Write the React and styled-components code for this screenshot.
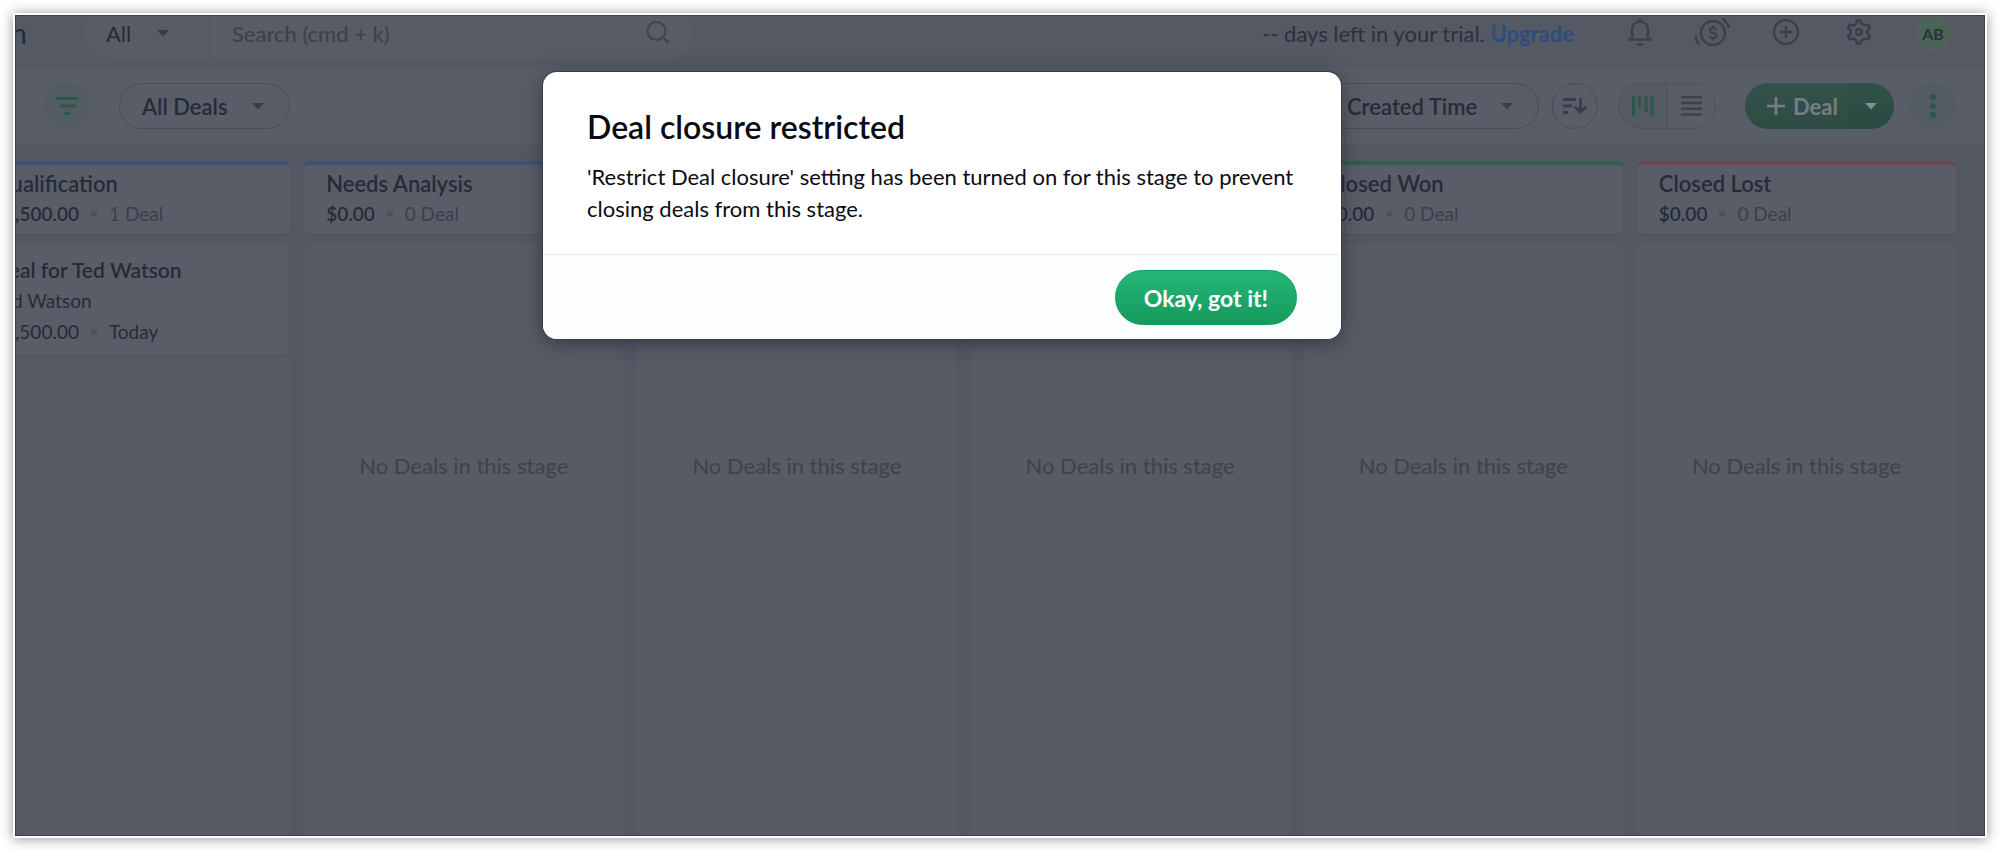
import React, { useState } from "react";
import styled, { createGlobalStyle } from "styled-components";

const GlobalStyle = createGlobalStyle`
  * {
    box-sizing: border-box;
  }

  body {
    margin: 0;
    background: #fff;
    color: #262b38;
    font-family: Lato, "Open Sans", sans-serif;
    font-size: 22px;
  }

  button,
  input,
  select {
    font: inherit;
    color: inherit;
    margin: 0;
  }

  p,
  h1,
  h2,
  h3 {
    margin: 0;
  }
`;

const Page = styled.div`
  height: 100vh;
  padding: 13px;
`;

const Frame = styled.div`
  position: relative;
  height: 100%;
  overflow: hidden;
  border: 2px solid #fff;
  background: #535863;
  box-shadow: 0 1px 12px rgba(0, 0, 0, 0.42);
`;

/* the board is scrolled a little to the right and down */
const Workspace = styled.div`
  display: flex;
  flex-direction: column;
  height: 100%;
  margin-left: -44px;
`;

const Header = styled.header`
  display: flex;
  flex: none;
  align-items: center;
  height: 68px;
  margin-top: -16px;
  padding-right: 36px;
  background: #545963;
`;

const Brand = styled.h1`
  flex: none;
  width: 56px;
  display: flex;
  justify-content: flex-end;
  font-size: 28px;
  font-weight: 400;
`;

const SearchBar = styled.div`
  display: flex;
  align-items: center;
  width: 609px;
  height: 50px;
  margin-left: 57px;
  padding-right: 23px;
  border-radius: 25px;
  background: #575c65;
  color: #3f444f;
`;

const SearchInput = styled.input`
  flex: 1;
  min-width: 0;
  height: 50px;
  padding: 0 22px;
  border: none;
  border-left: 1px solid #50545f;
  background: none;
  outline: none;

  &::placeholder {
    color: #3b404c;
    opacity: 1;
  }
`;

const SelectBox = styled.div`
  display: grid;
  align-items: center;

  > * {
    grid-area: 1 / 1;
  }

  svg {
    justify-self: end;
    margin-right: ${(props) => (props.$plain ? "40px" : "26px")};
    color: #383d48;
    pointer-events: none;
  }
`;

const Select = styled.select`
  appearance: none;
  width: ${(props) => props.$width};
  height: 46px;
  padding: 0 22px;
  border: ${(props) => (props.$plain ? "none" : "1px solid #484d5b")};
  border-radius: 23px;
  background: none;
  color: #262b38;
  font-weight: ${(props) => (props.$plain ? 400 : 600)};
  outline: none;
`;

const Trial = styled.p`
  margin-left: auto;
  color: #2b303d;
`;

const Upgrade = styled.a`
  color: #2d4d7e;
  font-weight: 700;
  text-decoration: none;
`;

const HeaderIcons = styled.nav`
  display: flex;
  align-items: center;
  gap: 33px;
  margin-left: 46px;
`;

const IconButton = styled.button`
  display: grid;
  place-items: center;
  width: 40px;
  height: 40px;
  padding: 0;
  border: none;
  background: none;
  color: #3a3f4b;
`;

const Avatar = styled.button`
  width: 32px;
  height: 32px;
  margin-left: 5px;
  padding: 0;
  border: none;
  border-radius: 50%;
  background: #4a6455;
  box-shadow: 0 0 0 2px #5a5f66;
  color: #2b323b;
  font-size: 16px;
  font-weight: 700;
`;

const Toolbar = styled.div`
  display: flex;
  flex: none;
  align-items: center;
  height: 79px;
  padding: 0 29px 0 73px;
  border-bottom: 1px solid #505560;
  background: #595d67;
`;

const RoundButton = styled.button`
  display: grid;
  place-items: center;
  flex: none;
  width: 46px;
  height: 46px;
  padding: 0;
  border: 1px solid ${(props) => (props.$outlined ? "#484d5b" : "#535b63")};
  border-radius: 50%;
  background: ${(props) => (props.$outlined ? "none" : "#535b63")};
  color: ${(props) => (props.$outlined ? "#383d4b" : "#2a584a")};
`;

const ToolGroup = styled.div`
  display: flex;
  align-items: center;
  margin-left: ${(props) => props.$gap};
`;

const ViewToggle = styled.div`
  display: flex;
  overflow: hidden;
  height: 46px;
  border: 1px solid #4d525f;
  border-radius: 23px;
`;

const ViewButton = styled.button`
  display: grid;
  place-items: center;
  width: 48px;
  padding: 0;
  border: none;
  background: ${(props) => (props.$active ? "#545964" : "none")};
  color: ${(props) => (props.$active ? "#2a584a" : "#3d424d")};

  & + & {
    border-left: 1px solid #4d525f;
  }
`;

const DealButtons = styled.div`
  display: flex;
  overflow: hidden;
  height: 46px;
  border-radius: 23px;
  background: linear-gradient(#32534a, #2d4b43);
  color: #777d84;
`;

const DealButton = styled.button`
  display: flex;
  align-items: center;
  gap: 8px;
  width: 103px;
  padding: 0 0 0 22px;
  border: none;
  background: none;
  font-weight: 700;
`;

const DealMenuButton = styled.button`
  display: grid;
  place-items: center;
  width: 46px;
  padding: 0;
  border: none;
  background: rgba(20, 60, 50, 0.06);
  color: #858b91;
`;

const Board = styled.main`
  display: grid;
  flex: 1;
  grid-template-columns: repeat(6, minmax(0, 1fr));
  gap: 14px;
  min-height: 0;
  padding: 15px 29px 0 0;
`;

const Column = styled.section`
  display: flex;
  flex-direction: column;
  gap: 10px;
  min-width: 0;
`;

const ColumnHead = styled.header`
  height: 73px;
  padding: 4px 22px;
  border-top: 4px solid ${(props) => props.$color};
  border-radius: 6px;
  background: #595d67;
  box-shadow: 0 1px 1px #505560;
  white-space: nowrap;
`;

const ColumnTitle = styled.h2`
  font-size: 22px;
  font-weight: 600;
  line-height: 30px;
`;

const Facts = styled.p`
  display: flex;
  align-items: center;
  gap: 12px;
`;

const Dot = styled.span`
  width: 6px;
  height: 6px;
  border-radius: 50%;
  background: #4b505c;
`;

const Amount = styled.span`
  font-weight: ${(props) => (props.$bold ? 600 : 400)};
`;

const Count = styled.span`
  color: #3b404c;
`;

const ColumnBody = styled.div`
  flex: 1;
  padding: 2px;
  border-radius: 6px 6px 0 0;
  background: #575b64;
`;

const Empty = styled.p`
  padding-top: 204px;
  color: #3d424e;
  line-height: 32px;
  text-align: center;
`;

const StageTotals = styled.div`
  font-size: 19px;
  line-height: 30px;
`;

const DealCard = styled.article`
  padding: 8px 20px;
  border-radius: 4px;
  background: #595d67;
  box-shadow: 0 1px 1px #505560;
  font-size: 19px;
  line-height: 31px;
  white-space: nowrap;
`;

const DealName = styled.h3`
  font-size: 21px;
  font-weight: 600;
`;

const Overlay = styled.div`
  position: absolute;
  inset: 0;
  display: flex;
  align-items: flex-start;
  justify-content: center;
  padding: 57px 116px 0 0;
  box-shadow: inset 0 0 0 1px #3a3f4b;
`;

const Dialog = styled.section`
  width: 798px;
  overflow: hidden;
  border-radius: 14px;
  background: #fff;
  box-shadow: 0 0 0 1px #3a3e49, 0 4px 20px rgba(20, 24, 36, 0.5);
  color: #0b0b14;
`;

const DialogBody = styled.div`
  padding: 35px 44px 29px;
`;

const DialogTitle = styled.h2`
  margin-bottom: 14px;
  font-size: 32px;
  font-weight: 600;
  line-height: 40px;
`;

const DialogText = styled.p`
  line-height: 32px;
`;

const DialogFooter = styled.footer`
  display: flex;
  justify-content: flex-end;
  padding: 15px 44px 14px;
  border-top: 1px solid #e6eef6;
  background: #fcfdfd;
`;

const OkButton = styled.button`
  height: 55px;
  padding: 0 28px;
  border: 1px solid #0c9f5c;
  border-radius: 28px;
  background: linear-gradient(#26b67a, #159a5b);
  color: #fff;
  font-size: 23px;
  font-weight: 700;
`;

const columns = [
  {
    name: "Qualification",
    color: "#3d5275",
    amount: "$1,500.00",
    count: "1 Deal",
    deals: [
      {
        name: "Deal for Ted Watson",
        contact: "Ted Watson",
        amount: "$1,500.00",
        date: "Today",
      },
    ],
  },
  { name: "Needs Analysis", color: "#3d5275" },
  { name: "Proposal/Price Quote", color: "#3d5275" },
  { name: "Negotiation/Review", color: "#3d5275" },
  { name: "Closed Won", color: "#345b51" },
  { name: "Closed Lost", color: "#6b4550" },
];

function Caret() {
  return (
    <svg width="12" height="7" viewBox="0 0 12 7" fill="currentColor">
      <path d="M0 0h12L6 6.5z" />
    </svg>
  );
}

function SearchIcon() {
  return (
    <svg width="24" height="24" viewBox="0 0 24 24" fill="none" stroke="currentColor" strokeWidth="2.2">
      <circle cx="10.5" cy="10" r="9" />
      <path d="M18 17.5l4.500 4" strokeWidth="3" />
    </svg>
  );
}

function BellIcon() {
  return (
    <svg width="26" height="30" viewBox="0 0 26 30" fill="none" stroke="currentColor" strokeWidth="2.4">
      <path d="M1 21.500h24M5 21.500V11.500a8 8 0 0 1 16 0v10M13 4V.5" />
      <path d="M9.500 25.500h7a3.500 2.500 0 0 1-7 0z" fill="currentColor" stroke="none" />
    </svg>
  );
}

function CoinIcon() {
  return (
    <svg width="38" height="32" viewBox="0 0 38 32" fill="none" stroke="currentColor" strokeWidth="2.4">
      <circle cx="19" cy="16" r="12" />
      <path d="M22.300 13c-.4-1.300-1.600-2-3.200-2-1.900 0-3.200.9-3.200 2.400 0 3.600 6.600 1.800 6.600 5.200 0 1.600-1.400 2.600-3.400 2.600-1.900 0-3.200-.9-3.500-2.400M19 8.800v2.200M19 21v2.400" strokeWidth="2" />
      <path d="M28 1.500c2.500.3 3.300 2 3.800 4 1.700.8 3 2.500 3 5.500M2 18.500c-.2 3.500.8 6.300 3.200 8.500" />
    </svg>
  );
}

function PlusCircleIcon() {
  return (
    <svg width="28" height="28" viewBox="0 0 28 28" fill="none" stroke="currentColor" strokeWidth="2.4">
      <circle cx="14" cy="13" r="12" />
      <path d="M14 7v12M8 13h12" />
    </svg>
  );
}

function GearIcon() {
  return (
    <svg width="28" height="28" viewBox="0 1 28 28" fill="none" stroke="currentColor" strokeWidth="2.500" strokeLinejoin="round">
      <path d="M11.600 4.600L12.200 2.400H15.800L16.400 4.600Q17.600 7.900 20.900 7.200L23.100 6.600L24.900 9.800L23.300 11.400Q21.200 14 23.300 16.600L24.900 18.200L23.100 21.400L20.900 20.800Q17.600 20.100 16.400 23.400L15.800 25.600H12.200L11.600 23.400Q10.400 20.100 7.100 20.800L4.900 21.400L3.100 18.200L4.700 16.600Q6.800 14 4.700 11.400L3.100 9.800L4.900 6.600L7.100 7.200Q10.400 7.900 11.600 4.600z" />
      <circle cx="14" cy="14" r="2.800" />
    </svg>
  );
}

function FilterIcon() {
  return (
    <svg width="22" height="18" viewBox="0 0 22 18" fill="currentColor">
      <path d="M0 0h22v3H0zM4.500 7.500h15v3h-15zM8.500 15h6v3h-6z" />
    </svg>
  );
}

function SortIcon() {
  return (
    <svg width="24" height="16" viewBox="0 0 24 16" fill="none" stroke="currentColor" strokeWidth="2.800">
      <path d="M0 1.500h13M0 8h9M0 14.500h5M17.500 0v14M11.500 8.500l6 5.500 6-5.500" />
    </svg>
  );
}

function KanbanIcon() {
  return (
    <svg width="22" height="20" viewBox="0 0 22 20" fill="currentColor">
      <path d="M0 0h3v20H0zM6 0h3v11H6zM12.500 0h3v16h-3zM18.500 0h3v20h-3z" />
    </svg>
  );
}

function ListIcon() {
  return (
    <svg width="21" height="20" viewBox="0 0 21 20" fill="currentColor">
      <path d="M0 0h21v2.500H0zM0 5.700h21v2.500H0zM0 11.500h21V14H0zM0 17.300h21v2.500H0z" />
    </svg>
  );
}

function PlusIcon() {
  return (
    <svg width="18" height="18" viewBox="0 0 18 18" fill="currentColor">
      <path d="M7.700 0h2.600v7.700H18v2.600h-7.700V18H7.700v-7.700H0V7.700h7.700z" />
    </svg>
  );
}

function MoreIcon() {
  return (
    <svg width="6" height="24" viewBox="0 0 6 24" fill="currentColor">
      <circle cx="3" cy="3" r="3" />
      <circle cx="3" cy="12" r="3" />
      <circle cx="3" cy="21" r="3" />
    </svg>
  );
}

function DropDown({ label, value, width, plain }) {
  return (
    <SelectBox $plain={plain}>
      <Select aria-label={label} $width={width} $plain={plain}>
        <option>{value}</option>
      </Select>
      <Caret />
    </SelectBox>
  );
}

function StageColumn({ stage }) {
  return (
    <Column>
      <ColumnHead $color={stage.color}>
        <ColumnTitle>{stage.name}</ColumnTitle>
        <StageTotals>
          <Facts>
            <Amount $bold>{stage.amount || "$0.00"}</Amount>
            <Dot />
            <Count>{stage.count || "0 Deal"}</Count>
          </Facts>
        </StageTotals>
      </ColumnHead>
      <ColumnBody>
        {stage.deals ? (
          stage.deals.map((deal) => (
            <DealCard key={deal.name}>
              <DealName>{deal.name}</DealName>
              <p>{deal.contact}</p>
              <Facts>
                <Amount>{deal.amount}</Amount>
                <Dot />
                <span>{deal.date}</span>
              </Facts>
            </DealCard>
          ))
        ) : (
          <Empty>No Deals in this stage</Empty>
        )}
      </ColumnBody>
    </Column>
  );
}

export default function App() {
  const [restricted, setRestricted] = useState(true);

  return (
    <Page>
      <GlobalStyle />
      <Frame>
        <Workspace>
          <Header>
            <Brand>Bigin</Brand>
            <SearchBar>
              <DropDown label="Search in" value="All" width="125px" plain />
              <SearchInput aria-label="Search" placeholder="Search (cmd + k)" />
              <SearchIcon />
            </SearchBar>
            <Trial>
              -- days left in your trial. <Upgrade href="#">Upgrade</Upgrade>
            </Trial>
            <HeaderIcons>
              <IconButton aria-label="Notifications">
                <BellIcon />
              </IconButton>
              <IconButton aria-label="Billing">
                <CoinIcon />
              </IconButton>
              <IconButton aria-label="Add">
                <PlusCircleIcon />
              </IconButton>
              <IconButton aria-label="Settings">
                <GearIcon />
              </IconButton>
              <Avatar>AB</Avatar>
            </HeaderIcons>
          </Header>

          <Toolbar>
            <RoundButton aria-label="Filter">
              <FilterIcon />
            </RoundButton>
            <ToolGroup $gap="29px">
              <DropDown label="Deals" value="All Deals" width="171px" />
            </ToolGroup>
            <ToolGroup $gap="auto">
              <DropDown label="Sort by" value="Created Time" width="215px" />
            </ToolGroup>
            <ToolGroup $gap="13px">
              <RoundButton aria-label="Sort order" $outlined>
                <SortIcon />
              </RoundButton>
            </ToolGroup>
            <ToolGroup $gap="20px">
              <ViewToggle>
                <ViewButton aria-label="Board view" $active>
                  <KanbanIcon />
                </ViewButton>
                <ViewButton aria-label="List view">
                  <ListIcon />
                </ViewButton>
              </ViewToggle>
            </ToolGroup>
            <ToolGroup $gap="29px">
              <DealButtons>
                <DealButton>
                  <PlusIcon />
                  Deal
                </DealButton>
                <DealMenuButton aria-label="More ways to add">
                  <Caret />
                </DealMenuButton>
              </DealButtons>
            </ToolGroup>
            <ToolGroup $gap="16px">
              <RoundButton aria-label="More">
                <MoreIcon />
              </RoundButton>
            </ToolGroup>
          </Toolbar>

          <Board>
            {columns.map((stage) => (
              <StageColumn key={stage.name} stage={stage} />
            ))}
          </Board>
        </Workspace>

        {restricted && (
          <Overlay>
            <Dialog role="dialog" aria-labelledby="restricted-title">
              <DialogBody>
                <DialogTitle id="restricted-title">
                  Deal closure restricted
                </DialogTitle>
                <DialogText>
                  'Restrict Deal closure' setting has been turned on for this
                  stage to prevent closing deals from this stage.
                </DialogText>
              </DialogBody>
              <DialogFooter>
                <OkButton onClick={() => setRestricted(false)}>
                  Okay, got it!
                </OkButton>
              </DialogFooter>
            </Dialog>
          </Overlay>
        )}
      </Frame>
    </Page>
  );
}
